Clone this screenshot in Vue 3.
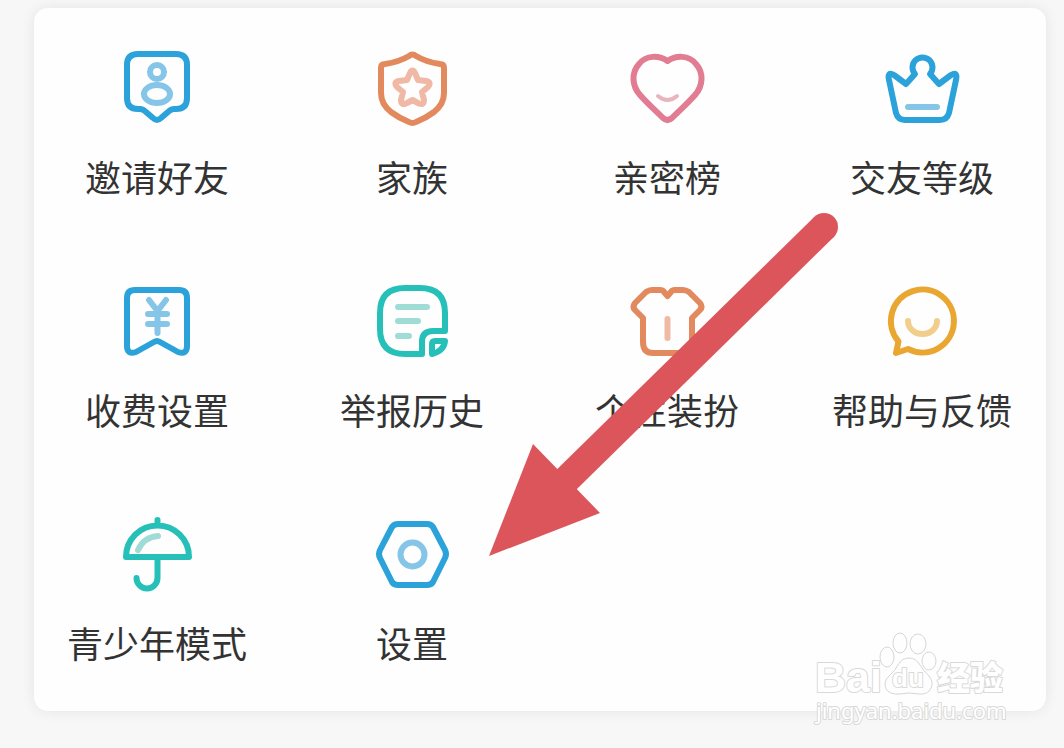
<script setup>
const items = [
  {
    label: '邀请好友',
    tone: 'blue',
    main: 'M21 7H59Q70 7 70 18V51Q70 62 59 62H57Q54 62 51 65L44 71Q40 75 36 71L29 65Q26 62 23 62H21Q10 62 10 51V18Q10 7 21 7Z',
    soft: 'M33 25a7 7 0 1 0 14 0a7 7 0 1 0 -14 0ZM27 47a13 9 0 1 0 26 0a13 9 0 1 0 -26 0Z',
  },
  {
    label: '家族',
    tone: 'orange',
    main: 'M37 9Q40.5 6 44 9Q54 15 68 17Q72 17 72 21V46Q72 57 62 65Q54 71 44 75Q40.5 77 37 75Q27 71 19 65Q9 57 9 46V21Q9 17 13 17Q27 15 37 9Z',
    soft: 'M38 26Q40.5 21 43 26L46 33L54 34Q60 35 56 40L50 45L52 53Q52 59 46 56L40.5 53L35 56Q29 59 29 53L31 45L25 40Q21 35 27 34L35 33Z',
  },
  {
    label: '亲密榜',
    tone: 'pink',
    main: 'M40.5 14C32 8 19 8 12 17C4 26 5 39 13 48C21 57 29 64 36 71Q40.5 75 45 71C52 64 60 57 68 48C76 39 77 26 69 17C62 8 49 8 40.5 14Z',
    soft: 'M31 49Q40.5 57 50 49',
    softWidth: 4,
  },
  {
    label: '交友等级',
    tone: 'blue',
    main: 'M24 37L33 27A10 10 0 1 1 48 27L57 37L69 28Q76 24 74 33L67 66Q65 73 58 73H23Q16 73 14 66L7 33Q5 24 12 28Z',
    soft: 'M26 60H55',
  },
  {
    label: '收费设置',
    tone: 'blue',
    main: 'M18 10H62Q70 10 70 18V66Q70 75 61 72L43 62Q40 60 37 62L19 72Q10 75 10 66V18Q10 10 18 10Z',
    soft: 'M32 20L40.5 31L49 20M40.5 31V53M31 34H50M31 44H50',
  },
  {
    label: '举报历史',
    tone: 'teal',
    main: 'M50 74H33Q8 74 8 49V33Q8 8 33 8H48Q73 8 73 33V51H61Q50 51 50 62ZM60 64Q60 61 63 61H73Q72 71 60 74Z',
    soft: 'M26 27H55M26 41H46M26 56H37',
  },
  {
    label: '个性装扮',
    tone: 'orange',
    main: 'M25 10H33Q36 10 37 12L40.5 16L44 12Q45 10 48 10H56Q59 10 62 12L73 23Q76 27 73 30L65 38V62Q65 73 55 73H26Q16 73 16 62V38L8 30Q5 27 8 23L19 12Q22 10 25 10Z',
    soft: 'M40.5 39V58',
  },
  {
    label: '帮助与反馈',
    tone: 'yellow',
    main: 'M16.5 61.5L14 73L26 69A31.5 31.5 0 1 0 16.5 61.5Z',
    soft: 'M26 41A14.5 13 0 0 0 55 41',
  },
  {
    label: '青少年模式',
    tone: 'teal',
    main: 'M9 44A31.5 31.5 0 0 1 72 44ZM40.5 7V12M40.5 44V65A10.5 10.5 0 0 1 19.5 65',
    soft: 'M21 37Q27 24 41 23',
  },
  {
    label: '设置',
    tone: 'blue',
    main: 'M26 11H55Q59 11 61 14L73 37Q75 41 73 45L61 69Q59 72 55 72H26Q22 72 20 69L8 45Q6 41 8 37L20 14Q22 11 26 11Z',
    soft: 'M28.5 41.5a12 12 0 1 0 24 0a12 12 0 1 0 -24 0Z',
  },
]
</script>

<template>
  <main class="page">
    <section class="card">
      <ul class="menu">
        <li v-for="item in items" :key="item.label" class="cell">
          <button type="button" class="entry" :class="item.tone">
            <svg class="icon" viewBox="0 0 80 80" aria-hidden="true">
              <path class="main" :d="item.main" />
              <path class="soft" :d="item.soft" :stroke-width="item.softWidth || 6" />
            </svg>
            <span class="label">{{ item.label }}</span>
          </button>
        </li>
      </ul>

      <svg class="arrow" viewBox="0 0 350 344" aria-hidden="true">
        <path class="shaft" d="M335 14L72 272" />
        <circle class="head" cx="335" cy="14" r="14" />
        <path class="head" d="M0 343L44 231L111 300Z" />
      </svg>

      <svg class="watermark" viewBox="0 0 200 100" role="img" aria-label="Baidu 经验">
        <text class="brand" x="3" y="64">Bai</text>
        <g class="paw">
          <ellipse cx="75" cy="29" rx="7" ry="10" />
          <ellipse cx="88" cy="15" rx="7" ry="10" />
          <ellipse cx="106" cy="16" rx="8" ry="10" />
          <ellipse cx="117" cy="33" rx="7" ry="9" />
          <path d="M97 30Q104 30 108 37Q111 42 117 48Q122 54 119 60Q116 67 107 66Q97 64 88 66Q78 67 74 61Q71 54 77 48Q83 43 86 37Q90 30 97 30Z" />
        </g>
        <text class="du" x="80" y="59">du</text>
        <text class="cn" x="125" y="62">经验</text>
        <text class="site" x="4" y="91">jingyan.baidu.com</text>
      </svg>
    </section>
  </main>
</template>

<style>
body {
  margin: 0;
  background: #f7f7f7;
}
</style>

<style scoped>
.page {
  padding: 8px 18px 37px 34px;
  font-family: "Liberation Sans", "Noto Sans CJK SC", sans-serif;
}

.card {
  position: relative;
  padding: 39px 17px 45px 16px;
  border-radius: 14px;
  background: #fefefe;
  box-shadow: 0 0 14px rgba(0, 0, 0, 0.08);
}

.menu {
  display: grid;
  grid-template-columns: repeat(4, minmax(0, 1fr));
  gap: 80px 41px;
  margin: 0;
  padding: 0;
  list-style: none;
}

.cell {
  display: flex;
  justify-content: center;
}

.entry {
  display: flex;
  flex-direction: column;
  align-items: center;
  gap: 25px;
  padding: 0;
  border: 0;
  background: none;
  color: #333;
  font-family: "Noto Sans CJK SC", sans-serif;
  font-size: 36px;
  line-height: 48px;
  white-space: nowrap;
  cursor: pointer;
}

.icon {
  width: 80px;
  height: 80px;
}

.icon path {
  fill: none;
  stroke-linecap: round;
  stroke-linejoin: round;
}

.icon .main {
  stroke: var(--main);
  stroke-width: 6px;
}

.icon .soft {
  stroke: var(--soft);
}

.blue {
  --main: #2ba2d9;
  --soft: #84c5e8;
}

.orange {
  --main: #e28a5e;
  --soft: #f0b9a5;
}

.pink {
  --main: #e17c92;
  --soft: #e8b4bf;
}

.teal {
  --main: #26c0b8;
  --soft: #a0dcd6;
}

.yellow {
  --main: #e9a631;
  --soft: #f2ce8c;
}

.arrow {
  position: absolute;
  top: 205px;
  left: 455px;
  width: 350px;
  height: 344px;
  pointer-events: none;
}

.shaft {
  fill: none;
  stroke: #db555b;
  stroke-width: 28px;
}

.head {
  fill: #db555b;
}

.watermark {
  position: absolute;
  right: 34px;
  bottom: -17px;
  width: 200px;
  height: 100px;
  pointer-events: none;
  overflow: visible;
}

.watermark text {
  fill: #fff;
  stroke: #d9d9d9;
  stroke-width: 2px;
  stroke-linejoin: round;
  paint-order: stroke;
}

.paw {
  fill: #fefefe;
  stroke: #d6d6d6;
  stroke-width: 1px;
}

.brand {
  font-size: 43px;
  font-weight: 700;
}

.du {
  font-size: 26px;
  font-weight: 700;
}

.cn {
  font-family: "Noto Sans CJK SC", sans-serif;
  font-size: 33px;
  font-weight: 900;
}

.site {
  font-family: "Noto Sans", sans-serif;
  font-size: 22px;
}
</style>
